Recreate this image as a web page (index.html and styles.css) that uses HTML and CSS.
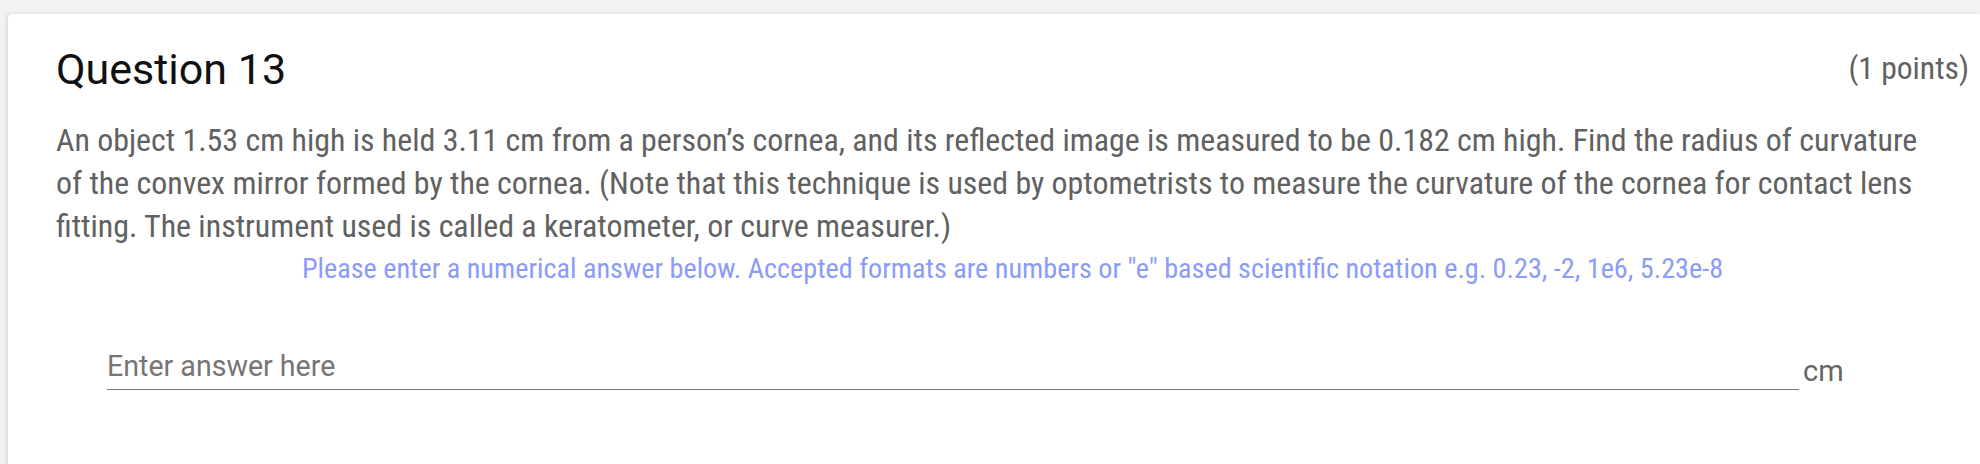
FILE: index.html
```html
<!DOCTYPE html>
<html lang="en">
<head>
<meta charset="utf-8">
<title>Question 13</title>
<link rel="stylesheet" href="styles.css">
</head>
<body>
<div class="card">
  <div class="q-head">
    <h2 class="q-title">Question 13</h2>
    <span class="q-points">(1 points)</span>
  </div>
  <p class="q-body">An object 1.53 cm high is held 3.11 cm from a person’s cornea, and its reflected image is measured to be 0.182 cm high. Find the radius of curvature of the convex mirror formed by the cornea. (Note that this technique is used by optometrists to measure the curvature of the cornea for contact lens fitting. The instrument used is called a keratometer, or curve measurer.)</p>
  <p class="q-hint">Please enter a numerical answer below. Accepted formats are numbers or "e" based scientific notation e.g. 0.23, -2, 1e6, 5.23e-8</p>
  <div class="answer-row">
    <input class="answer-input" type="text" placeholder="Enter answer here">
    <span class="answer-unit">cm</span>
  </div>
</div>
</body>
</html>
```
FILE: styles.css
```css
html, body {
  margin: 0;
  padding: 0;
}
body {
  background: #f2f2f2;
  font-family: Roboto, "Noto Sans", sans-serif;
  height: 464px;
  overflow: hidden;
}
.card {
  margin: 14px 0 0 8px;
  background: #fff;
  border-radius: 4px 0 0 0;
  box-shadow: -1px 0 4px rgba(0,0,0,0.12);
  padding: 30px 11px 80px 48px;
  min-height: 500px;
  box-sizing: border-box;
}
.q-head {
  display: flex;
  justify-content: space-between;
  align-items: flex-start;
}
.q-title {
  margin: 0;
  font-size: 43px;
  line-height: 50px;
  font-weight: 400;
  color: #111;
}
.q-points {
  font-size: 31.6px;
  line-height: 50px;
  font-stretch: condensed;
  color: #616161;
}
.q-body {
  margin: 25px 40px 0 0;
  font-size: 31.9px;
  line-height: 43px;
  font-stretch: condensed;
  color: #616161;
}
.q-hint {
  margin: 6px 0 0 0;
  text-align: center;
  font-size: 28.2px;
  line-height: 30px;
  font-stretch: condensed;
  color: #8b9bf8;
}
.answer-row {
  display: flex;
  align-items: flex-end;
  margin: 65px 0 0 51px;
}
.answer-input {
  width: 1692px;
  border: 0;
  border-bottom: 1px solid #757575;
  outline: none;
  padding: 0 0 6px 0;
  font-family: Roboto, "Noto Sans", sans-serif;
  font-size: 28.6px;
  color: #333;
  background: transparent;
}
.answer-input::placeholder {
  color: #757575;
}
.answer-unit {
  margin-left: 4px;
  font-size: 29px;
  color: #666;
  padding-bottom: 2px;
}
```
